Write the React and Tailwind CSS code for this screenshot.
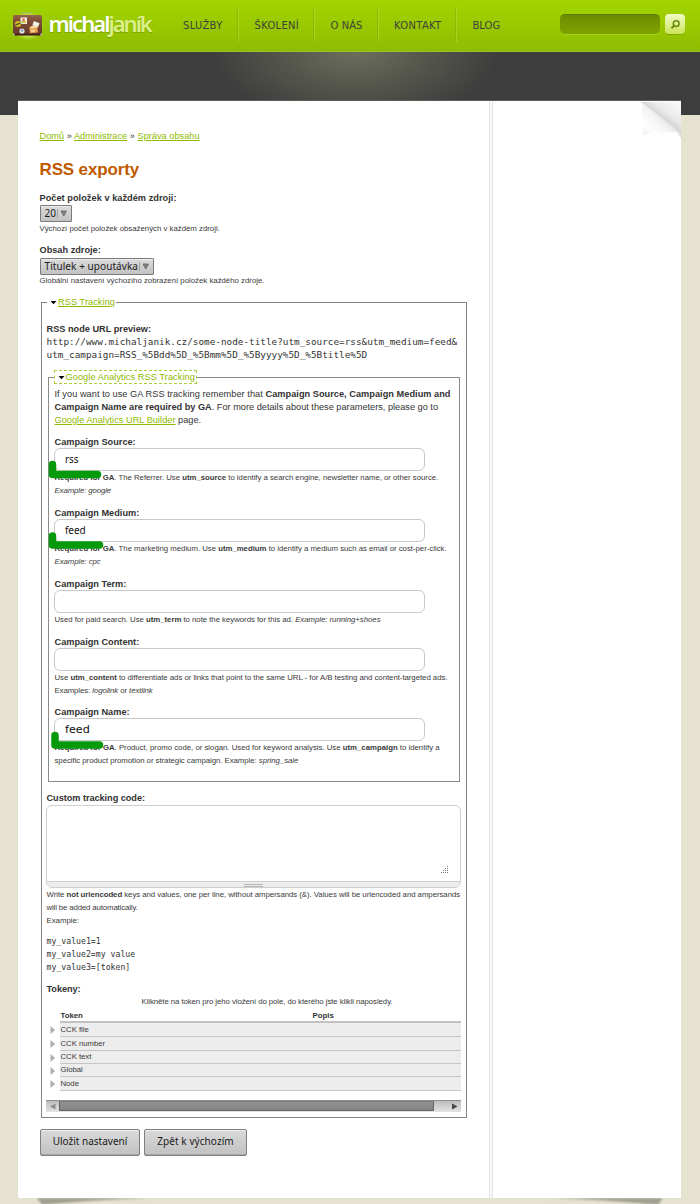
import React from "react";

const label = "block h-[13px] whitespace-nowrap text-[9.2px] font-bold text-[#333]";
const desc = "whitespace-pre text-[7.8px] leading-[12.75px] text-[#3a3a3a]";
const link = "text-[#8fba00] underline";

function Suitcase() {
  return (
    <svg width="33" height="28" viewBox="0 0 33 28" className="shrink-0">
      <defs>
        <radialGradient id="halo">
          <stop offset="0.6" stopColor="#e6ff8a" stopOpacity="0.75" />
          <stop offset="1" stopColor="#e6ff8a" stopOpacity="0" />
        </radialGradient>
        <linearGradient id="leather" x1="0" y1="0" x2="0" y2="1">
          <stop offset="0" stopColor="#94654a" />
          <stop offset="0.25" stopColor="#7f4e39" />
          <stop offset="1" stopColor="#643629" />
        </linearGradient>
      </defs>
      <ellipse cx="16.5" cy="14" rx="16.5" ry="14" fill="url(#halo)" />
      <path d="M11 3.500V2Q11 1 12.500 1h7Q21 1 21 2V3.500" fill="none" stroke="#b9b38c" strokeWidth="1" />
      <rect x="2" y="3" width="29" height="20.500" rx="2" fill="url(#leather)" />
      <path d="M2 22.500h29" stroke="#3f241a" strokeWidth="1.500" />
      <rect x="2" y="21.500" width="1.500" height="2" fill="#cfd2bb" />
      <rect x="29.500" y="21.500" width="1.500" height="2" fill="#cfd2bb" />
      <rect x="9.500" y="5.500" width="6.500" height="6.500" fill="#f4f1e4" />
      <circle cx="12.600" cy="7.700" r="1.300" fill="#e4543c" />
      <circle cx="11.600" cy="10" r="1.200" fill="#9cbf3a" />
      <circle cx="14" cy="10" r="1.200" fill="#e9bf3a" />
      <circle cx="7" cy="12" r="3" fill="#d9bd23" />
      <path d="M4.500 12.800l5-1.600" stroke="#47542a" strokeWidth="1.300" />
      <rect x="22" y="10" width="6" height="4.500" fill="#eef0e8" transform="rotate(22 25 12)" />
      <rect x="18.500" y="14.500" width="8" height="6.500" fill="#e9a052" transform="rotate(-6 22 17)" />
      <rect x="20" y="14" width="6.500" height="2" fill="#f6dcae" transform="rotate(-6 22 17)" />
      <rect x="20" y="17.500" width="4" height="2.500" fill="#f3c888" />
      <circle cx="11" cy="19" r="2.600" fill="#dfe6ea" />
      <circle cx="11" cy="18.500" r="1.300" fill="#8aa6b5" />
    </svg>
  );
}

function NavItem({ children, className }) {
  return (
    <a className={"block h-[38px] whitespace-nowrap font-['DejaVu_Sans',sans-serif] text-[10px] leading-[37px] text-[#40433a] " + className}>
      {children}
    </a>
  );
}

function NavSep() {
  return <span className="h-[35px] w-[2px] shrink-0 border-l border-r border-l-[#86b500] border-r-[#aedb2a] opacity-70" />;
}

function Header() {
  return (
    <header className="flex h-[52px] items-start border-b border-[#9cc12c] bg-linear-to-b from-[#a3d500] to-[#8fbc02]">
      <div className="flex w-[183px] shrink-0 pt-[12px] pl-[11px]">
        <Suitcase />
        <div className="-mt-[5px] ml-[4.500px] flex font-['Noto_Sans',sans-serif] text-[22px] leading-[32px] whitespace-nowrap [text-shadow:0_1px_1px_rgba(90,120,0,0.45)]">
          <span className="w-[60px] font-semibold tracking-[-1.92px] text-white">michal</span>
          <span className="font-semibold tracking-[-2px] text-[#dcf08a]">janík</span>
        </div>
      </div>
      <nav className="flex w-[377px] shrink-0 pt-[7px]">
        <NavItem className="w-[54px] tracking-[0.28px]">SLUŽBY</NavItem>
        <NavSep />
        <NavItem className="w-[74px] pl-[15.500px] tracking-[0.28px]">ŠKOLENÍ</NavItem>
        <NavSep />
        <NavItem className="w-[62px] pl-[15.500px] tracking-[0.06px]">O NÁS</NavItem>
        <NavSep />
        <NavItem className="w-[76px] pl-[15px] tracking-[0.3px]">KONTAKT</NavItem>
        <NavSep />
        <NavItem className="pl-[15.500px]">BLOG</NavItem>
      </nav>
      <div className="flex gap-[5px] pt-[14px]">
        <div className="h-[20px] w-[100px] rounded-[5px] border-t border-[#5d7a00] bg-linear-to-b from-[#6d8d00] to-[#80a200] shadow-[0_1px_0_#a6d31c]" />
        <button className="flex h-[20px] w-[20px] items-center justify-center rounded-[4px] bg-linear-to-b from-[#f1fac6] to-[#cbe353] shadow-[0_1px_0_#7fa800]">
          <svg width="11" height="11" viewBox="0 0 11 11" fill="none" stroke="#6a8a08">
            <circle cx="6.200" cy="4.600" r="2.900" strokeWidth="1.500" />
            <path d="M4 6.800L1.500 9.200" strokeWidth="2" />
          </svg>
        </button>
      </div>
    </header>
  );
}

function Select({ children, className }) {
  return (
    <div className={"flex h-[17px] items-center rounded-[1px] border border-[#7b7b7b] bg-linear-to-b from-[#dcdcdc] to-[#c2c2c2] pl-[4px] font-['Noto_Sans',sans-serif] text-[10px] leading-[15px] whitespace-nowrap text-[#1c1c1c] shadow-[inset_0_1px_0_#ededed] " + className}>
      <span className="-mt-px flex-1">{children}</span>
      <span className="h-[9px] w-px bg-[#a0a0a0]" />
      <svg width="13" height="9" viewBox="0 0 13 9">
        <path d="M3 2h5.500L5.750 7z" fill="#858585" stroke="#606060" strokeWidth="0.800" />
      </svg>
    </div>
  );
}

function Arrow() {
  return (
    <svg width="7" height="5" viewBox="0 0 7 5" className="-ml-[0.500px] shrink-0">
      <path d="M0.500 1h6L3.500 4.200z" fill="#000" />
    </svg>
  );
}

function Marker({ children }) {
  return (
    <svg width="58" height="22" viewBox="0 0 58 22" className="pointer-events-none absolute top-[11px] -left-[6px]" fill="none" stroke="#049a0c" strokeWidth="7.500" strokeLinecap="round" strokeLinejoin="round">
      {children}
    </svg>
  );
}

function Field({ title, value, valueClass, mark, height, children }) {
  return (
    <div className={height}>
      <span className={label + " leading-[14px]"}>{title}</span>
      <div className="relative -ml-[0.500px] h-[23px] w-[371px]">
        <div className={"h-[23px] rounded-[6px] border border-[#c9c9c9] bg-white pl-[10px] leading-[21px] text-[#111] " + (valueClass || "")}>{value}</div>
        {mark && <Marker><path d={mark} /></Marker>}
      </div>
      <div className={desc + " pt-[0.750px]"}>{children}</div>
    </div>
  );
}

const noto = "font-['Noto_Sans',sans-serif] text-[10px] tracking-[-0.1px]";

function TokenRow({ name, height }) {
  return (
    <div className={"flex " + height}>
      <div className="flex w-[14px] items-center pl-[4px]">
        <svg width="6" height="8" viewBox="0 0 6 8"><path d="M0.500 0L5.200 4L0.500 8z" fill="#b0b0b0" /></svg>
      </div>
      <div className="flex flex-1 items-center border-b border-[#c6c6c6] bg-[#ededed] pl-[0.500px] text-[7.8px] leading-[12px] tracking-[-0.05px] text-[#3a3a3a]">{name}</div>
    </div>
  );
}

function Tokens() {
  return (
    <div className="-ml-[0.500px] w-[415px]">
      <div className="h-[13px] pl-[27px] text-center text-[7.8px] leading-[13px] tracking-[-0.071px] whitespace-nowrap text-[#3a3a3a]">
        Klikněte na token pro jeho vložení do pole, do kterého jste klikli naposledy.
      </div>
      <div className="ml-[14px] flex h-[15px] border-b-2 border-[#c2c2c2] pl-[0.500px] text-[7.8px] leading-[15px] font-bold text-[#333]">
        <span className="w-[252px]">Token</span>
        <span>Popis</span>
      </div>
      <TokenRow name="CCK file" height="h-[14px]" />
      <TokenRow name="CCK number" height="h-[14px]" />
      <TokenRow name="CCK text" height="h-[13px]" />
      <TokenRow name="Global" height="h-[13px]" />
      <TokenRow name="Node" height="h-[14px]" />
      <div className="mt-[9px] flex h-[12px] border-t border-[#8c8c8c] bg-linear-to-b from-[#bdbdbd] to-[#e4e4e4]">
        <svg width="13" height="11" viewBox="0 0 13 11"><path d="M9.500 2.500v6L4 5.500z" fill="#8e8e8e" /></svg>
        <div className="h-[10px] w-[375px] rounded-[1px] border border-[#666] border-t-[#7a7a7a] bg-linear-to-b from-[#929292] to-[#838383]" />
        <div className="flex-1" />
        <svg width="13" height="11" viewBox="0 0 13 11"><path d="M4 2.500v6L9.500 5.500z" fill="#444" /></svg>
      </div>
    </div>
  );
}

function CustomCode() {
  return (
    <div className="w-[415px]">
      <span className={label + " leading-[13px] tracking-[-0.05px]"}>Custom tracking code:</span>
      <div className="-ml-[0.500px] h-[83px] w-[415px] overflow-hidden rounded-[6px] border border-[#cfcfcf]">
        <div className="flex h-[75px] items-end justify-end pr-[11px] pb-[7px]">
          <svg width="8" height="8" viewBox="0 0 8 8" fill="#777">
            <path d="M6 0h1v1h-1zM6 2h1v1h-1zM4 2h1v1h-1zM6 4h1v1h-1zM4 4h1v1h-1zM2 4h1v1h-1zM6 6h1v1h-1zM4 6h1v1h-1zM2 6h1v1h-1zM0 6h1v1h-1z" />
          </svg>
        </div>
        <div className="flex h-[7px] flex-col items-center gap-px border-t border-[#cfcfcf] bg-[#ededed] pt-[2px]">
          <span className="h-px w-[19px] bg-[#b5b5b5]" />
          <span className="h-px w-[19px] bg-[#b5b5b5]" />
        </div>
      </div>
      <div className={desc + " pt-px"}>
        <div className="tracking-[-0.045px]">Write <b>not urlencoded</b> keys and values, one per line, without ampersands (&amp;). Values will be urlencoded and ampersands</div>
        <div className="tracking-[-0.13px]">will be added automatically.</div>
        <div>Example:</div>
      </div>
      <pre className="mt-[8px] h-[38.500px] font-['DejaVu_Sans_Mono',monospace] text-[8.2px] leading-[12.75px] text-[#333]">{"my_value1=1\nmy_value2=my value\nmy_value3=[token]"}</pre>
    </div>
  );
}

function Analytics() {
  return (
    <fieldset className="mt-[8.5px] ml-[1.500px] h-[412px] w-[412px] border border-[#8a8a8a] pl-[5.500px]">
      <legend className="-ml-[0.500px] flex h-[14px] w-[143px] items-center border border-dashed border-[#a9cf3c] pl-[3px] text-[9.2px] leading-[12px] tracking-[0.08px] whitespace-nowrap text-[#8fba00]">
        <Arrow /><span className="ml-[1px]">Google Analytics RSS Tracking</span>
      </legend>
      <div className="mt-[4px] h-[47px] text-[9.2px] leading-[12.75px] whitespace-pre text-[#333]">
        <div><span className="tracking-[0.054px]">If you want to use GA RSS tracking remember that </span><b className="tracking-[0.034px]">Campaign Source, Campaign Medium and</b></div>
        <div><b>Campaign Name are required by GA</b>. For more details about these parameters, please go to</div>
        <div><a className={link + " tracking-[0.03px]"}>Google Analytics URL Builder</a> page.</div>
      </div>
      <Field title="Campaign Source:" value="rss" valueClass={noto} height="h-[71px]" mark="M4.500 5.500V15.500H49.500">
        <div className="tracking-[-0.025px]"><b>Required for GA</b>. The Referrer. Use <b>utm_source</b> to identify a search engine, newsletter name, or other source.</div>
        <i className="tracking-[-0.1px]">Example: google</i>
      </Field>
      <Field title="Campaign Medium:" value="feed" valueClass={noto} height="h-[71px]" mark="M4.500 6V15H51.500">
        <div className="tracking-[-0.02px]"><b>Required for GA</b>. The marketing medium. Use <b>utm_medium</b> to identify a medium such as email or cost-per-click.</div>
        <i className="tracking-[-0.05px]">Example: cpc</i>
      </Field>
      <Field title="Campaign Term:" height="h-[58px]">
        <div className="tracking-[-0.03px]">Used for paid search. Use <b>utm_term</b> to note the keywords for this ad. <i>Example: running+shoes</i></div>
      </Field>
      <Field title="Campaign Content:" height="h-[70px]">
        <div className="tracking-[-0.035px]">Use <b>utm_content</b> to differentiate ads or links that point to the same URL - for A/B testing and content-targeted ads.</div>
        <div className="tracking-[-0.08px]">Examples: <i>logolink</i> or <i>textlink</i></div>
      </Field>
      <Field title="Campaign Name:" value="feed" valueClass="font-['DejaVu_Sans',sans-serif] text-[11.2px]" height="h-[65px]" mark="M7 6.500V16H51.500">
        <div className="tracking-[-0.01px]"><b>Required for GA</b>. Product, promo code, or slogan. Used for keyword analysis. Use <b>utm_campaign</b> to identify a</div>
        <div className="tracking-[-0.04px]">specific product promotion or strategic campaign. Example: <i>spring_sale</i></div>
      </Field>
    </fieldset>
  );
}

function Tracking() {
  return (
    <fieldset className="mt-[9px] ml-px h-[822px] w-[426px] border border-[#848484] pl-[5px]">
      <legend className="flex h-[13px] items-center pr-px pl-[4px] text-[9.2px] leading-[13px] tracking-[0.07px] whitespace-nowrap">
        <Arrow /><a className={link + " ml-[1px]"}>RSS Tracking</a>
      </legend>
      <span className={label + " mt-[14px] leading-[13px]"}>RSS node URL preview:</span>
      <div className="h-[25.500px] font-['DejaVu_Sans_Mono',monospace] text-[9.36px] leading-[12.75px] whitespace-pre text-[#333]">
        {"http://www.michaljanik.cz/some-node-title?utm_source=rss&utm_medium=feed&\nutm_campaign=RSS_%5Bdd%5D_%5Bmm%5D_%5Byyyy%5D_%5Btitle%5D"}
      </div>
      <Analytics />
      <div className="mt-[10px]"><CustomCode /></div>
      <span className={label + " mt-[8.500px] leading-[14px] tracking-[-0.08px]"}>Tokeny:</span>
      <Tokens />
    </fieldset>
  );
}

function Button({ children, className }) {
  return (
    <button className={"h-[27px] rounded-[2px] border border-[#808080] bg-linear-to-b from-[#dadada] to-[#c1c1c1] pb-px font-['Noto_Sans',sans-serif] text-[10px] whitespace-nowrap text-[#1a1a1a] shadow-[inset_0_1px_0_#eee,inset_0_-1px_0_#a8a8a8] " + className}>
      {children}
    </button>
  );
}

function PageCurl() {
  return (
    <svg width="40" height="38" viewBox="0 0 40 38">
      <defs>
        <linearGradient id="behind" x1="22" y1="17" x2="34" y2="1" gradientUnits="userSpaceOnUse">
          <stop offset="0" stopColor="#d6d6d6" />
          <stop offset="0.350" stopColor="#ebebeb" />
          <stop offset="1" stopColor="#f8f8f8" />
        </linearGradient>
        <linearGradient id="flap" x1="3" y1="33" x2="20" y2="15" gradientUnits="userSpaceOnUse">
          <stop offset="0" stopColor="#f1f1f1" />
          <stop offset="0.300" stopColor="#fefefe" />
          <stop offset="0.800" stopColor="#f3f3f3" />
          <stop offset="1" stopColor="#e6e6e6" />
        </linearGradient>
      </defs>
      <path d="M0 1H40V37Q36 29 0 1z" fill="url(#behind)" />
      <path d="M0 1Q20 15 38 31Q40 33 40 37Q38 31 33 31Q20 32 1.500 33.500Q3 14 0 1z" fill="url(#flap)" />
    </svg>
  );
}

export default function App() {
  return (
    <div className="flex h-[1204px] w-[700px] flex-col overflow-hidden bg-[#e5e2cf] font-['Liberation_Sans',Arial,sans-serif] text-[#333]">
      <Header />
      <div className="h-[63px] shrink-0 bg-[#3d3d3d] bg-[radial-gradient(ellipse_145px_72px_at_355px_0px,#6b6e5c_0%,#56584e_45%,#3d3d3d_100%)]" />
      <main className="relative -mt-[15px] ml-[18px] flex h-[1098px] w-[663px] shrink-0 border-t border-[#5c5c5c] bg-white">
        <section className="w-[471px] shrink-0 pt-[29px] pl-[21.500px]">
          <div className="h-[13px] text-[9.2px] leading-[13.500px] tracking-[0.02px] whitespace-nowrap">
            <a className={link}>Domů</a> » <a className={link}>Administrace</a> » <a className={link}>Správa obsahu</a>
          </div>
          <h1 className="mt-[14px] h-[24px] text-[17px] leading-[25px] font-bold tracking-[-0.14px] text-[#c05a00]">RSS exporty</h1>
          <span className={label + " mt-[11px] leading-[13px] tracking-[0.04px]"}>Počet položek v každém zdroji:</span>
          <Select className="w-[32.500px]">20</Select>
          <div className="h-[13px] text-[7.8px] leading-[13px] text-[#3a3a3a]">Výchozí počet položek obsažených v každém zdroji.</div>
          <span className={label + " mt-[9px] leading-[13px]"}>Obsah zdroje:</span>
          <Select className="mt-px w-[114.500px] tracking-[0.067px]">Titulek + upoutávka</Select>
          <div className="-mt-px h-[13px] text-[7.8px] leading-[13px] text-[#3a3a3a]">Globální nastavení výchozího zobrazení položek každého zdroje.</div>
          <Tracking />
          <div className="mt-[10.500px] ml-[0.500px] flex gap-[4px]">
            <Button className="w-[100px]">Uložit nastavení</Button>
            <Button className="w-[103px] tracking-[0.07px]">Zpět k výchozím</Button>
          </div>
        </section>
        <div className="w-[4px] shrink-0 border-x border-[#e2e2e2] bg-[#f8f8f8]" />
        <aside className="flex flex-1 items-start justify-end"><PageCurl /></aside>
      </main>
      <svg width="700" height="6" viewBox="0 0 700 6" className="shrink-0">
        <defs>
          <filter id="soft" x="-5%" y="-50%" width="110%" height="250%"><feGaussianBlur stdDeviation="1.200" /></filter>
        </defs>
        <g filter="url(#soft)" fill="#a19f90">
          <path d="M37 0H150Q90 2 42 7z" />
          <path d="M663 0H550Q610 2 658 7z" />
        </g>
      </svg>
    </div>
  );
}
